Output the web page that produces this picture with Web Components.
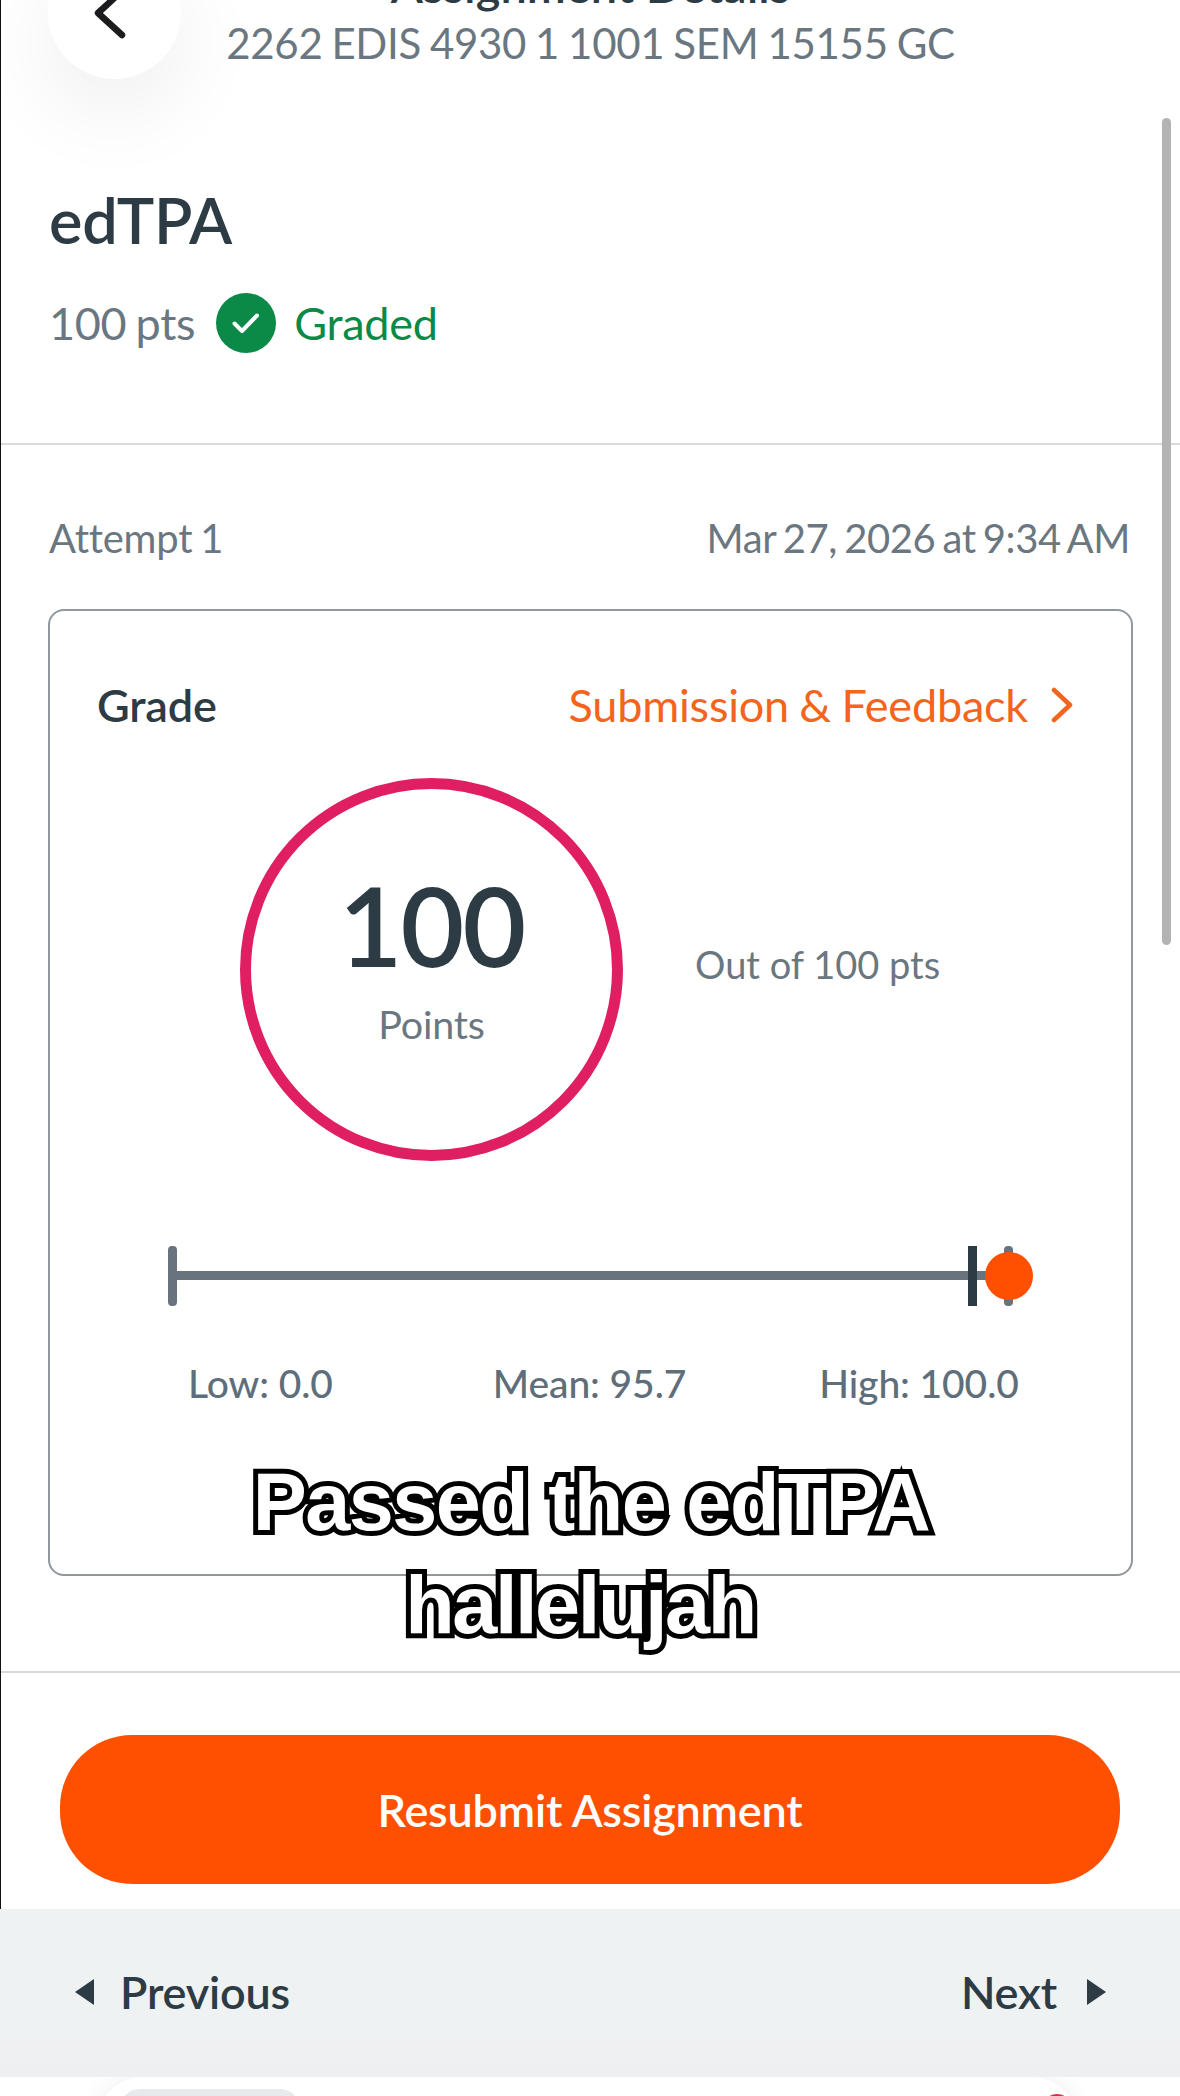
<!DOCTYPE html>
<html lang="en">
<head>
<meta charset="utf-8">
<title>Assignment Details</title>
<style>
  html, body { margin: 0; padding: 0; background: #fff; }
  body { width: 1180px; height: 2096px; overflow: hidden; position: relative; font-family: Lato, "Open Sans", sans-serif; color: #2d3b45; }
</style>
</head>
<body>
<x-page>
  <x-header slot="main" title-text="Assignment Details" sub="2262 EDIS 4930 1 1001 SEM 15155 GC"></x-header>
  <x-summary slot="main" name="edTPA" points="100 pts" status="Graded"></x-summary>
  <x-attempt slot="main" label="Attempt 1" date="Mar 27, 2026 at 9:34 AM"></x-attempt>
  <x-grade-card slot="main"></x-grade-card>
  <x-action slot="main">Resubmit Assignment</x-action>
  <x-pager></x-pager>
  <x-tabbar></x-tabbar>
</x-page>
<x-scrollbar></x-scrollbar>
<x-caption>
  <span>Passed the edTPA</span>
  <span style="margin-right:22px;letter-spacing:-2.4px">hallelujah</span>
</x-caption>

<script>
function define(name, css, html, attrs) {
  customElements.define(name, class extends HTMLElement {
    connectedCallback() {
      if (this.shadowRoot) return;
      const root = this.attachShadow({ mode: 'open' });
      let markup = html;
      for (const a of (attrs || [])) markup = markup.split('{{' + a + '}}').join(this.getAttribute(a) || '');
      root.innerHTML = '<style>' + css + '</style>' + markup;
    }
  });
}

define('x-page', `
  :host { display: flex; flex-direction: column; width: 1180px; height: 2096px; }
  .main { display: flex; flex-direction: column; border-left: 1px solid #111; height: 1909px; box-sizing: border-box; }
`, `<div class="main"><slot name="main"></slot></div><slot></slot>`);

define('x-header', `
  :host { display: block; height: 120px; position: relative; flex: none; }
  .txt { margin-top: -40px; text-align: center; line-height: 50px; }
  .t { font-size: 47px; font-weight: 600; color: #2d3b45; }
  .s { font-size: 42px; color: #6b7780; margin-top: 8px; letter-spacing: -.3px; word-spacing: -1.5px; }
  .back { position: absolute; left: 47px; top: -54px; width: 133px; height: 133px; border-radius: 50%; background: #fff; box-shadow: 0 30px 90px rgba(0,0,0,.07); }
  .back svg { position: absolute; left: 40px; top: 30px; overflow: visible; }
`, `
  <div class="txt"><div class="t">{{title-text}}</div><div class="s">{{sub}}</div></div>
  <div class="back"><svg width="50" height="80" viewBox="0 0 50 80"><path d="M34 15 L10 37 L34 59" fill="none" stroke="#1c1c1e" stroke-width="6.5" stroke-linecap="round" stroke-linejoin="round"/></svg></div>
`, ['title-text', 'sub']);

define('x-summary', `
  :host { display: block; padding: 64px 0 90px 48px; border-bottom: 2px solid #d7dadd; flex: none; }
  h1 { margin: 0; font-size: 63px; line-height: 72px; font-weight: 600; color: #2d3b45; letter-spacing: -.3px; }
  .row { display: flex; align-items: center; margin-top: 37px; height: 60px; font-size: 45px; letter-spacing: -.3px; word-spacing: -2px; }
  .pts { color: #6b7780; }
  .badge { width: 60px; height: 60px; margin: 0 18px 0 21px; flex: none; }
  .st { color: #0b8a47; }
`, `
  <h1>{{name}}</h1>
  <div class="row"><span class="pts">{{points}}</span>
    <svg class="badge" viewBox="0 0 60 60"><circle cx="30" cy="30" r="30" fill="#0b8a47"/><path d="M18.5 30.5 L26 38 L41 22.5" fill="none" stroke="#fff" stroke-width="4" stroke-linecap="round" stroke-linejoin="round"/></svg>
    <span class="st">{{status}}</span></div>
`, ['name', 'points', 'status']);

define('x-attempt', `
  :host { display: flex; justify-content: space-between; padding: 68px 50px 0 48px; font-size: 40px; line-height: 50px; color: #6b7780; flex: none; letter-spacing: -.25px; word-spacing: -2px; }
  .d { letter-spacing: -.42px; word-spacing: -2.6px; }
`, `<span>{{label}}</span><span class="d">{{date}}</span>`, ['label', 'date']);

define('x-score-ring', `
  :host { display: flex; align-items: center; margin: 47px 0 0 190px; }
  .ring { width: 383px; height: 383px; box-sizing: border-box; border: 11px solid #e01f62; border-radius: 50%; padding-top: 80px; text-align: center; flex: none; }
  .n { font-size: 110px; line-height: 110px; font-weight: 600; color: #2d3b45; letter-spacing: -2px; }
  .p { font-size: 39.5px; line-height: 46px; margin-top: 22px; color: #6b7780; letter-spacing: -.2px; }
  .o { margin-left: 72px; padding-bottom: 12px; font-size: 38px; color: #6b7780; }
`, `<div class="ring"><div class="n">100</div><div class="p">Points</div></div><div class="o">Out of 100 pts</div>`);

define('x-range', `
  :host { display: block; margin: 85px 0 0 118px; width: 866px; }
  .track { position: relative; height: 60px; }
  .line { position: absolute; left: 0; right: 30px; top: 25px; height: 9px; background: #68737e; }
  .tick { position: absolute; top: 0; width: 9px; height: 60px; background: #68737e; border-radius: 4px; }
  .mean { left: 800px; background: #2d3b45; border-radius: 0; }
  .hi { left: 836px; }
  .dot { position: absolute; left: 817px; top: 6px; width: 48px; height: 48px; border-radius: 50%; background: #fe5000; }
`, `<div class="track"><div class="line"></div><div class="tick" style="left:0"></div><div class="tick hi"></div><div class="tick mean"></div><div class="dot"></div></div>`);

define('x-range-labels', `
  :host { display: flex; margin: 54px 0 0 138px; font-size: 39px; line-height: 46px; font-weight: 500; color: #5f6e7b; letter-spacing: -.1px; }
  span:nth-of-type(2) { margin-left: 160px; }
  span:nth-of-type(3) { margin-left: 133px; }
`, `<span>Low: 0.0</span><span>Mean: 95.7</span><span>High: 100.0</span>`);

define('x-grade-card', `
  :host { display: block; margin: 46px 47px 0 47px; padding: 70px 0 168px; border: 2px solid #8f979f; border-radius: 16px; flex: none; box-sizing: border-box; height: 967px; }
  .head { display: flex; justify-content: space-between; align-items: center; height: 48px; padding: 0 58px 2px 47px; font-size: 45px; letter-spacing: -.2px; }
  .g { color: #2d3b45; font-weight: 600; }
  .l { display: flex; align-items: center; color: #f4641c; word-spacing: -1px; }
  .l svg { margin-left: 23px; }
`, `
  <div class="head"><span class="g">Grade</span><span class="l">Submission &amp; Feedback<svg width="22" height="36" viewBox="0 0 22 36"><path d="M3 3 L19 18 L3 33" fill="none" stroke="#f4641c" stroke-width="4.5" stroke-linecap="round" stroke-linejoin="round"/></svg></span></div>
  <x-score-ring></x-score-ring>
  <x-range></x-range>
  <x-range-labels></x-range-labels>
`);

define('x-action', `
  :host { display: block; flex: none; margin-top: 95px; border-top: 2px solid #d7dadd; padding: 62px 60px 0 59px; }
  button { display: block; width: 100%; height: 149px; border: 0; border-radius: 72px; background: #fe5000; color: #fff; font: 600 45px Lato, sans-serif; letter-spacing: -.2px; padding: 0; }
`, `<button><slot></slot></button>`);

define('x-pager', `
  :host { display: flex; justify-content: space-between; align-items: center; flex: none; height: 168px; box-sizing: border-box; padding: 0 74px 2px 75px; background: linear-gradient(#eff2f3 70%, #edeff0); font-size: 45px; letter-spacing: -.2px; color: #2d3b45; font-weight: 600; }
  span { display: flex; align-items: center; }
  .p svg { margin-right: 26px; }
  .n svg { margin-left: 30px; }
`, `
  <span class="p"><svg width="19" height="26" viewBox="0 0 19 26"><path d="M19 0 V26 L0 13 Z" fill="#2d3b45"/></svg>Previous</span>
  <span class="n">Next<svg width="19" height="26" viewBox="0 0 19 26"><path d="M0 0 V26 L19 13 Z" fill="#2d3b45"/></svg></span>
`);

define('x-tabbar', `
  :host { display: block; flex: none; height: 19px; position: relative; overflow: hidden; background: #fff; }
  .shade { position: absolute; left: 98px; right: 104px; top: 0; height: 80px; background: #fff; border-radius: 44px 44px 0 0; box-shadow: 0 0 26px rgba(0,0,0,.07); }
  .pill { position: absolute; left: 120px; top: 12px; width: 180px; height: 40px; border-radius: 26px; background: #e8e9ea; }
  .dot { position: absolute; left: 1042px; top: 17px; width: 30px; height: 30px; border-radius: 50%; background: #d92e4c; }
`, `<div class="shade"></div><div class="pill"></div><div class="dot"></div>`);

define('x-scrollbar', `
  :host { display: block; position: absolute; left: 1162px; top: 118px; width: 9px; height: 827px; border-radius: 5px; background: #b3b3b3; }
`, ``);

define('x-caption', `
  :host { display: flex; flex-direction: column; align-items: center; position: absolute; left: 0; top: 1451px; width: 1182px; font-family: "Liberation Sans", Arial, sans-serif; font-weight: 700; font-size: 81px; line-height: 103px; letter-spacing: -1.5px; color: #fff; -webkit-text-stroke: 10px #000; paint-order: stroke fill; }
`, `<slot></slot>`);
</script>
</body>
</html>
